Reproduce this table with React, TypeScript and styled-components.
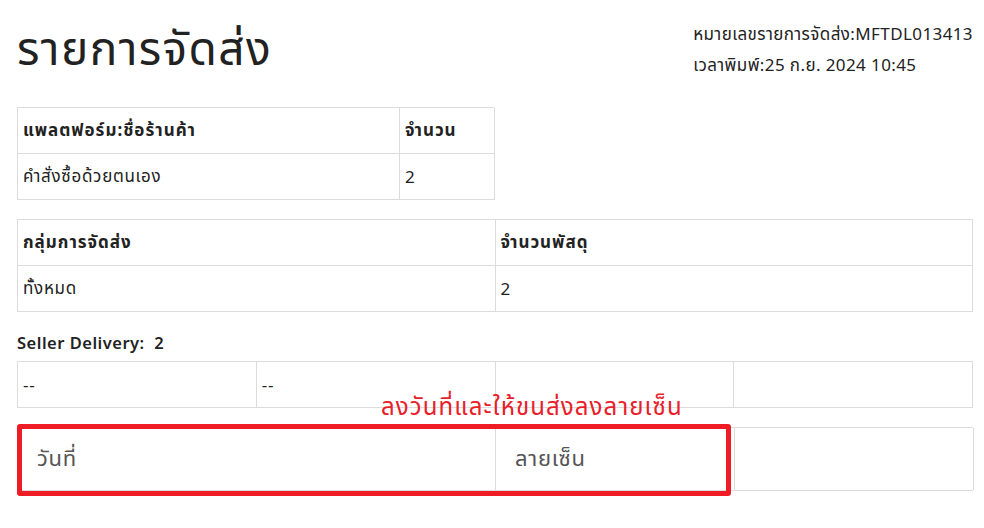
import styled, { createGlobalStyle } from "styled-components";

const GlobalStyle = createGlobalStyle`
  body {
    margin: 0;
    background: #fff;
    font-family: "Noto Sans", "Noto Sans Thai", "Noto Sans CJK SC", sans-serif;
    color: #222;
  }
`;

interface CellProps {
  head?: boolean;
}

const App: React.FC = () => {
  return (
    <Page>
      <GlobalStyle />
      <Header>
        <Title>รายการจัดส่ง</Title>
        <Meta>
          <MetaLine>หมายเลขรายการจัดส่ง:MFTDL013413</MetaLine>
          <MetaLine>เวลาพิมพ์:25 ก.ย. 2024 10:45</MetaLine>
        </Meta>
      </Header>

      <Table width="477px" cols="382px 95px">
        <Cell head>แพลตฟอร์ม:ชื่อร้านค้า</Cell>
        <Cell head>จำนวน</Cell>
        <Cell>คำสั่งซื้อด้วยตนเอง</Cell>
        <Cell>2</Cell>
      </Table>

      <Table width="956px" cols="1fr 1fr">
        <Cell head>กลุ่มการจัดส่ง</Cell>
        <Cell head>จำนวนพัสดุ</Cell>
        <Cell>ทั้งหมด</Cell>
        <Cell>2</Cell>
      </Table>

      <SectionLabel>Seller Delivery:&nbsp; 2</SectionLabel>
      <Table width="956px" cols="1fr 1fr 1fr 1fr">
        <Cell>--</Cell>
        <Cell>--</Cell>
        <Cell />
        <Cell />
      </Table>

      <SignWrap>
        <Note>ลงวันที่และให้ขนส่งลงลายเซ็น</Note>
        <SignTable>
          <SignCell>วันที่</SignCell>
          <SignCell>ลายเซ็น</SignCell>
          <SignCell />
        </SignTable>
        <Highlight />
      </SignWrap>
    </Page>
  );
};

export default App;

const Page = styled.div`
  width: 984px;
  min-height: 528px;
  padding: 0 17px;
  box-sizing: border-box;
`;

const Header = styled.div`
  display: flex;
  justify-content: space-between;
  align-items: flex-start;
  height: 107px;
`;

const Title = styled.h1`
  margin: 19px 0 0;
  font-size: 46px;
  font-weight: 400;
  letter-spacing: 1.4px;
  line-height: 56px;
  color: #222;
`;

const Meta = styled.div`
  display: flex;
  flex-direction: column;
  padding-top: 18px;
  margin-right: -6px;
`;

const MetaLine = styled.div`
  font-size: 17px;
  letter-spacing: 0.4px;
  line-height: 31px;
  color: #222;
`;

const Table = styled.div<{ width: string; cols: string }>`
  display: grid;
  width: ${({ width }) => width};
  grid-template-columns: ${({ cols }) => cols};
  border-top: 1px solid #dcdcdc;
  border-left: 1px solid #dcdcdc;
  box-sizing: border-box;
  margin-bottom: 19px;
`;

const Cell = styled.div<CellProps>`
  height: 46px;
  box-sizing: border-box;
  padding: 0 5px;
  display: flex;
  align-items: center;
  border-right: 1px solid #dcdcdc;
  border-bottom: 1px solid #dcdcdc;
  font-size: 17px;
  letter-spacing: ${({ head }) => (head ? "1px" : "0.7px")};
  font-weight: ${({ head }) => (head ? 700 : 400)};
  color: #222;
`;

const SectionLabel = styled.div`
  font-size: 16.5px;
  font-weight: 600;
  letter-spacing: 0.5px;
  line-height: 24px;
  margin: 15px 0 6px;
  color: #222;
`;

const SignWrap = styled.div`
  position: relative;
  margin-top: 1px;
`;

const Note = styled.div`
  position: absolute;
  left: 364px;
  top: -37px;
  font-size: 24px;
  letter-spacing: 1.1px;
  line-height: 32px;
  color: #e8202a;
  white-space: nowrap;
`;

const SignTable = styled.div`
  display: grid;
  width: 956px;
  grid-template-columns: 478px 239px 239px;
  border: 1px solid #dcdcdc;
  border-right: none;
  box-sizing: border-box;
`;

const SignCell = styled.div`
  height: 62px;
  box-sizing: border-box;
  padding: 0 19px;
  display: flex;
  align-items: center;
  border-right: 1px solid #dcdcdc;
  font-size: 22px;
  letter-spacing: 0.7px;
  color: #555;
`;

const Highlight = styled.div`
  position: absolute;
  left: 0;
  top: -3px;
  width: 714px;
  height: 72px;
  box-sizing: border-box;
  border: 5px solid #ee1c25;
  border-radius: 3px;
  pointer-events: none;
`;
